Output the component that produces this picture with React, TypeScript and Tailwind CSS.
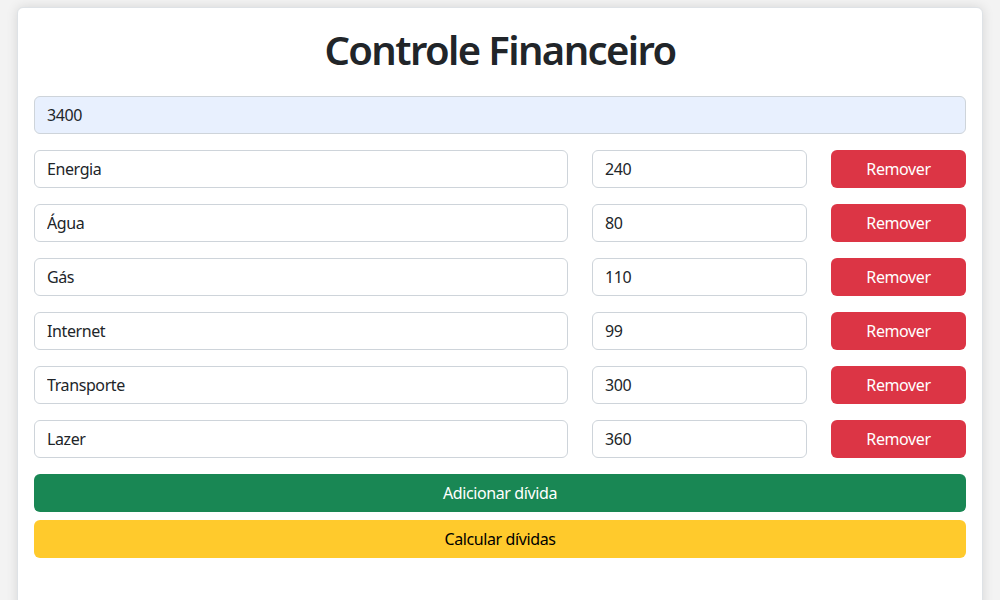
import React from "react";

const debts = [
  { name: "Energia", value: "240" },
  { name: "Água", value: "80" },
  { name: "Gás", value: "110" },
  { name: "Internet", value: "99" },
  { name: "Transporte", value: "300" },
  { name: "Lazer", value: "360" },
];

export default function App() {
  return (
    <div
      className="min-h-[600px] bg-[#f3f3f3] overflow-hidden text-[#212529] tracking-[-0.4px]"
      style={{ fontFamily: '"Noto Sans", "Open Sans", sans-serif' }}
    >
      <div className="mx-auto mt-[7px] w-[966px] h-[640px] bg-white border border-[#dee2e6] rounded-md shadow-[0_0_12px_rgba(0,0,0,0.12)] p-4">
        <h1 className="text-[40px] font-semibold leading-[52px] text-center mb-5 tracking-[-1.6px]">
          Controle Financeiro
        </h1>
        <input
          readOnly
          value="3400"
          className="block w-full h-[38px] px-3 rounded-md border border-[#ced4da] bg-[#e8f0fe] text-base outline-none"
        />
        <div className="flex flex-col gap-4 mt-4">
          {debts.map((d) => (
            <div key={d.name} className="grid grid-cols-[534px_215px_135px] gap-6">
              <input
                readOnly
                value={d.name}
                className="block w-full h-[38px] px-3 rounded-md border border-[#ced4da] bg-white text-base outline-none"
              />
              <input
                readOnly
                value={d.value}
                className="block w-full h-[38px] px-3 rounded-md border border-[#ced4da] bg-white text-base outline-none"
              />
              <button className="h-[38px] rounded-md bg-[#dc3545] text-white text-base">
                Remover
              </button>
            </div>
          ))}
        </div>
        <button className="mt-4 block w-full h-[38px] rounded-md bg-[#198754] text-white text-base">
          Adicionar dívida
        </button>
        <button className="mt-2 block w-full h-[38px] rounded-md bg-[#ffca2c] text-black text-base">
          Calcular dívidas
        </button>
      </div>
    </div>
  );
}
